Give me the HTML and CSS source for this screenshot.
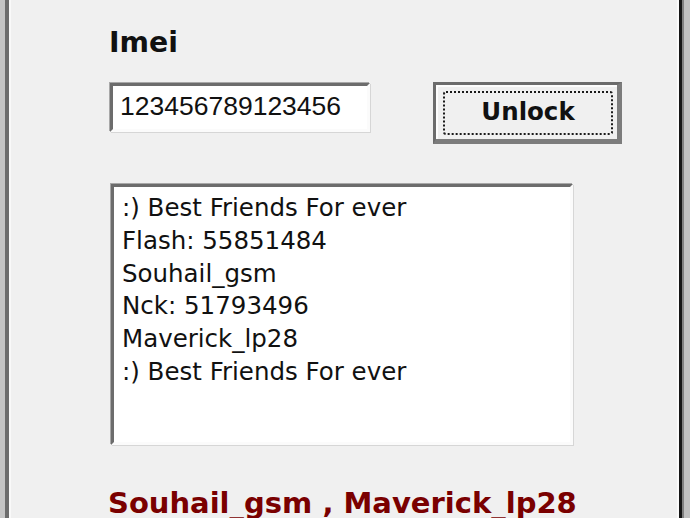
FILE: index.html
```html
<!DOCTYPE html>
<html lang="en">
<head>
  <meta charset="UTF-8">
  <title>Imei Unlock</title>
  <link rel="stylesheet" href="styles.css">
</head>
<body>
  <div class="window">
    <div class="form">
      <div class="label">Imei</div>

      <!-- Imei input + unlock -->
      <div class="row">
        <div class="edit">123456789123456</div>
        <button class="btn"><span class="focus">Unlock</span></button>
      </div>

      <!-- Output -->
      <div class="memo">
        <div>:) Best Friends For ever</div>
        <div>Flash: 55851484</div>
        <div>Souhail_gsm</div>
        <div>Nck: 51793496</div>
        <div>Maverick_lp28</div>
        <div>:) Best Friends For ever</div>
      </div>

      <div class="credits">Souhail_gsm , Maverick_lp28</div>
    </div>
  </div>
</body>
</html>
```

FILE: styles.css
```css
body {
  margin: 0;
  background: #f0f0f0;
  overflow: hidden;
  font-family: Tahoma, "DejaVu Sans", sans-serif;
  color: #111;
}
.window {
  height: 518px;
  box-sizing: border-box;
  padding: 0 13px 0 11px;
  overflow: hidden;
  box-shadow:
    inset 5px 0 #c4c4c4,
    inset 9px 0 #6c6c6c,
    inset 11px 0 #f9f9f9,
    inset -6px 0 #c0c0c0,
    inset -8px 0 #808080,
    inset -11px 0 #151515,
    inset -13px 0 #fafafa;
}
.form {
  margin-left: 99px;
  padding-top: 26px;
}
.label {
  margin-left: -1px;
  font: bold 28.3px/34px "DejaVu Sans", sans-serif;
}
.row {
  display: flex;
  align-items: flex-start;
  gap: 63px;
  margin-top: 22px;
}
.edit {
  margin-top: 1px;
  width: 260px;
  height: 49px;
  box-sizing: border-box;
  border: 3px solid;
  border-color: #6c6c6c #fbfbfb #fbfbfb #6c6c6c;
  box-shadow: 1px 1px 0 #d6d6d6, -1px -1px 0 #a8a8a8;
  background: #fff;
  padding: 5px 0 0 7px;
  font: 26.5px/30px "Liberation Sans", sans-serif;
}
.btn {
  display: flex;
  width: 189px;
  height: 62px;
  box-sizing: border-box;
  margin: 0;
  border: 3px solid #6c6c6c;
  border-right-width: 5px;
  border-bottom-width: 5px;
  border-right-color: #7c7c7c;
  border-bottom-color: #7c7c7c;
  background: #f0f0f0;
  box-shadow: inset 2px 2px #fdfdfd;
  padding: 6px 4px 4px 7px;
}
.focus {
  flex: 1;
  display: flex;
  align-items: center;
  justify-content: center;
  padding-bottom: 4px;
  border: 2px dotted #1a1a1a;
  border-radius: 3px;
  font: bold 24.5px "DejaVu Sans", sans-serif;
  color: #111;
}
.memo {
  margin-top: 40px;
  margin-left: 1px;
  width: 462px;
  height: 261px;
  box-sizing: border-box;
  border: 3px solid;
  border-color: #6c6c6c #fbfbfb #fbfbfb #6c6c6c;
  box-shadow: 1px 1px 0 #d6d6d6, -1px -1px 0 #a8a8a8;
  background: #fff;
  padding: 5px 0 0 8px;
  font: 24.5px/32.8px "DejaVu Sans", sans-serif;
}
.credits {
  margin-top: 41px;
  margin-left: -2px;
  font: bold 29px/35px "DejaVu Sans", sans-serif;
  color: #7a0000;
  white-space: nowrap;
}
```
